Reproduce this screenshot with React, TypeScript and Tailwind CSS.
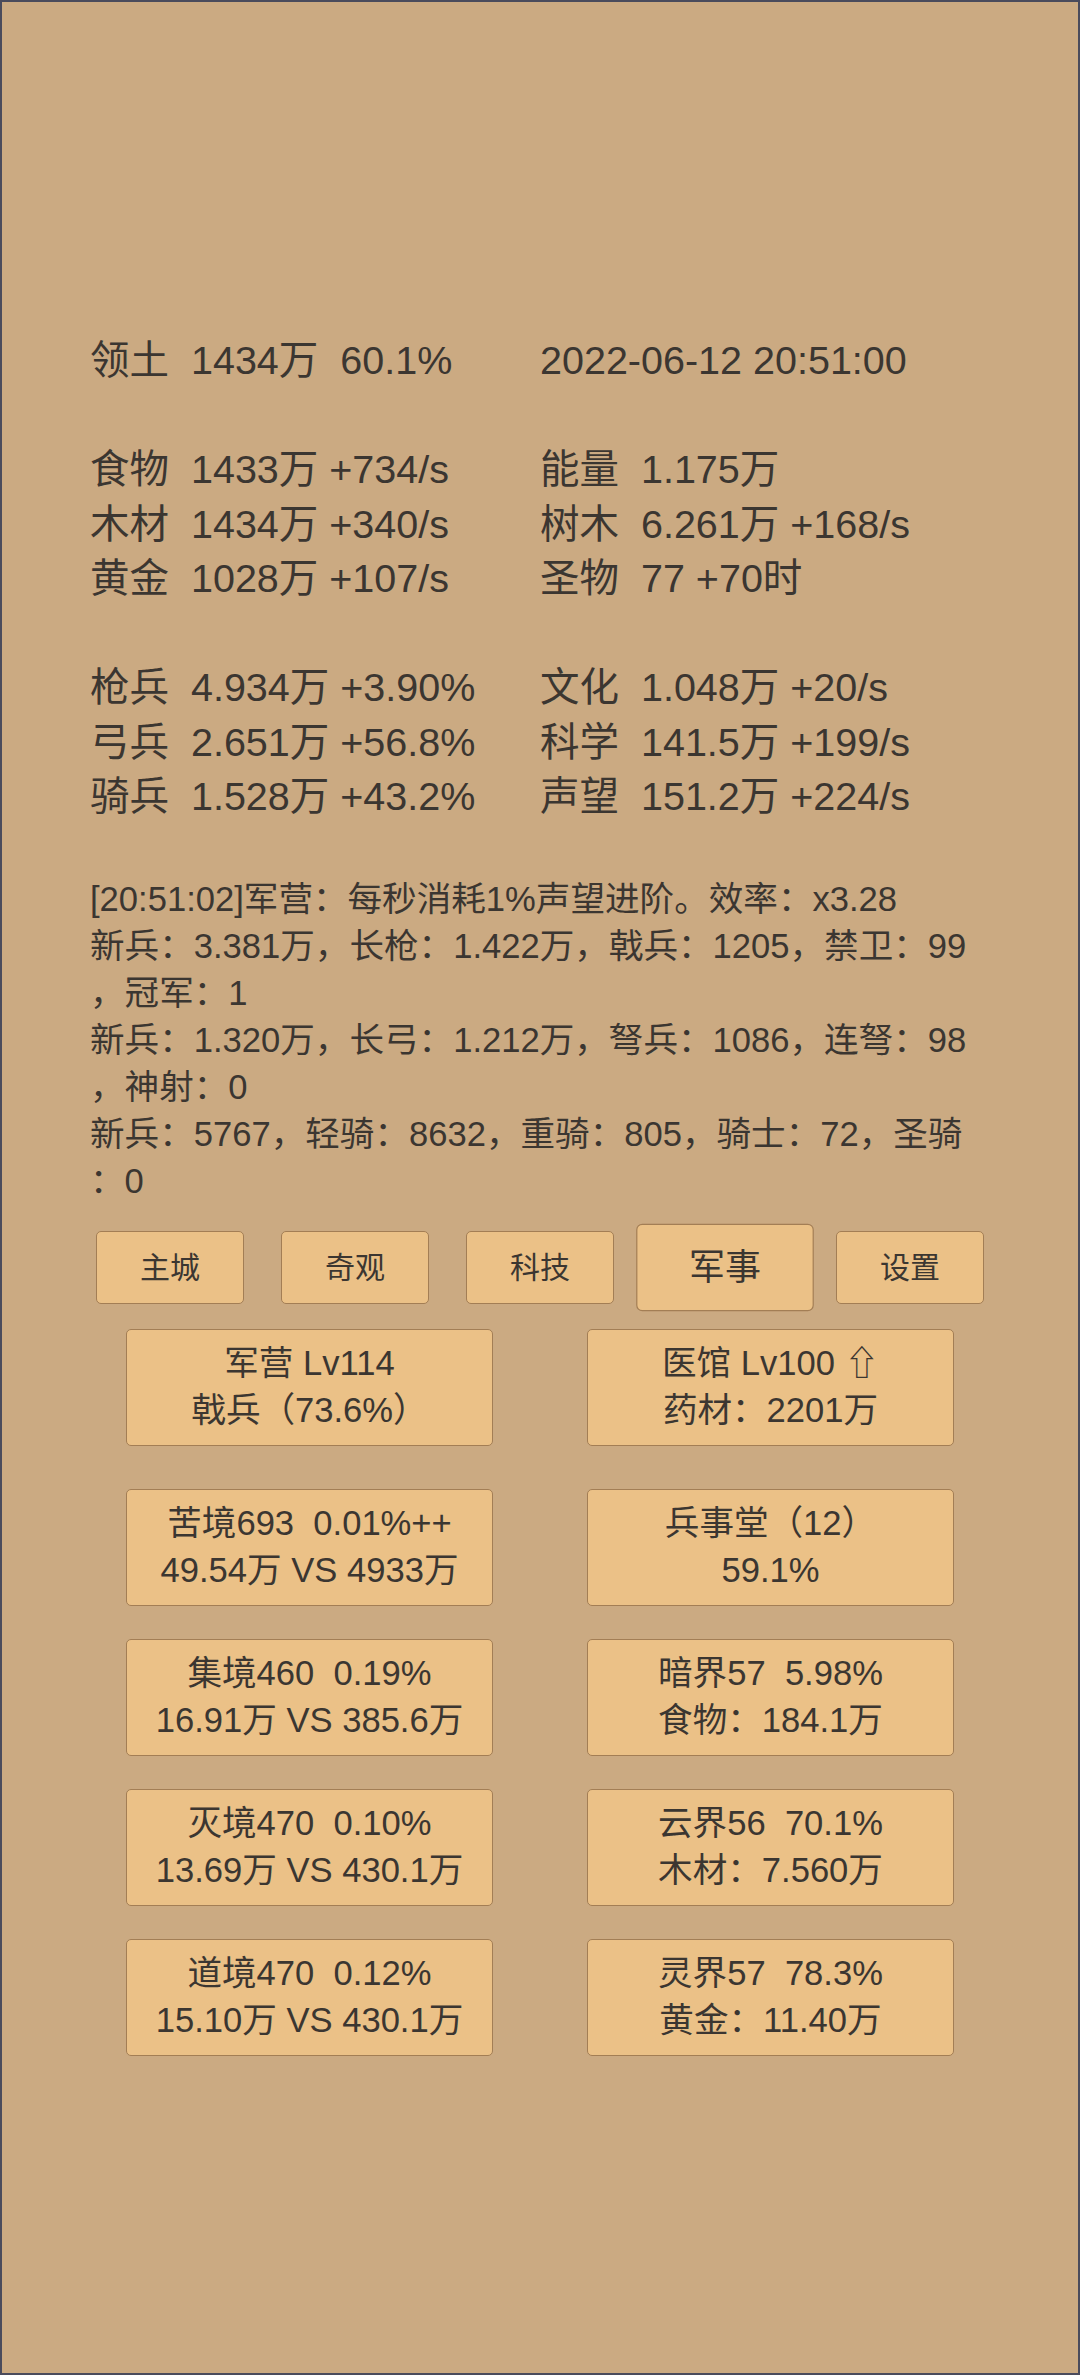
import React from "react";

const stats: [string, string][] = [
  ["领土  1434万  60.1%", "2022-06-12 20:51:00"],
  ["", ""],
  ["食物  1433万 +734/s", "能量  1.175万"],
  ["木材  1434万 +340/s", "树木  6.261万 +168/s"],
  ["黄金  1028万 +107/s", "圣物  77 +70时"],
  ["", ""],
  ["枪兵  4.934万 +3.90%", "文化  1.048万 +20/s"],
  ["弓兵  2.651万 +56.8%", "科学  141.5万 +199/s"],
  ["骑兵  1.528万 +43.2%", "声望  151.2万 +224/s"],
];

const log = [
  "[20:51:02]军营：每秒消耗1%声望进阶。效率：x3.28",
  "新兵：3.381万，长枪：1.422万，戟兵：1205，禁卫：99",
  "，冠军：1",
  "新兵：1.320万，长弓：1.212万，弩兵：1086，连弩：98",
  "，神射：0",
  "新兵：5767，轻骑：8632，重骑：805，骑士：72，圣骑",
  "：0",
];

const tabs = ["主城", "奇观", "科技", "军事", "设置"];

const cards: [string, string][][] = [
  [
    ["军营 Lv114", "戟兵（73.6%）"],
    ["医馆 Lv100 ⇧", "药材：2201万"],
  ],
  [
    ["苦境693  0.01%++", "49.54万 VS 4933万"],
    ["兵事堂（12）", "59.1%"],
  ],
  [
    ["集境460  0.19%", "16.91万 VS 385.6万"],
    ["暗界57  5.98%", "食物：184.1万"],
  ],
  [
    ["灭境470  0.10%", "13.69万 VS 430.1万"],
    ["云界56  70.1%", "木材：7.560万"],
  ],
  [
    ["道境470  0.12%", "15.10万 VS 430.1万"],
    ["灵界57  78.3%", "黄金：11.40万"],
  ],
];

function Card({ a, b }: { a: string; b: string }) {
  return (
    <div className="w-[367px] h-[117px] flex flex-col items-center justify-center rounded-[5px] border border-[#a37e55] bg-[#ebc187] text-[34.6px] leading-[47px] whitespace-pre">
      <div>{a}</div>
      <div>{b}</div>
    </div>
  );
}

export default function App() {
  return (
    <div className="min-h-screen w-full border-2 border-[#4a4b5c] bg-[#cbaa82] text-[#3b3631] font-['Liberation_Sans','Noto_Sans_CJK_SC',sans-serif]">
      <div className="mx-auto w-[900px] pt-[331px] pb-[300px]">
        <div className="grid grid-cols-2 text-[39.5px] leading-[54.5px] whitespace-pre">
          {stats.map(([l, r], i) => (
            <React.Fragment key={i}>
              <div className="h-[54.5px]">{l}</div>
              <div className="h-[54.5px]">{r}</div>
            </React.Fragment>
          ))}
        </div>

        <div className="mt-[52px] text-[34.6px] leading-[47px] whitespace-pre">
          {log.map((t, i) => (
            <div key={i}>{t}</div>
          ))}
        </div>

        <div className="mt-[26px] flex justify-center gap-[37px]">
          {tabs.map((t) => (
            <div
              key={t}
              className={
                t === "军事"
                  ? "w-[148px] h-[73px] flex items-center justify-center rounded-[5px] border border-[#a37e55] bg-[#ebc187] text-[30px] scale-120"
                  : "w-[148px] h-[73px] flex items-center justify-center rounded-[5px] border border-[#a37e55] bg-[#ebc187] text-[30px]"
              }
            >
              {t}
            </div>
          ))}
        </div>

        <div className="mt-[25px] flex flex-col">
          {cards.map((row, i) => (
            <div
              key={i}
              className={
                i === 0
                  ? "flex justify-center gap-[94px]"
                  : i === 1
                  ? "mt-[43px] flex justify-center gap-[94px]"
                  : "mt-[33px] flex justify-center gap-[94px]"
              }
            >
              <Card a={row[0][0]} b={row[0][1]} />
              <Card a={row[1][0]} b={row[1][1]} />
            </div>
          ))}
        </div>
      </div>
    </div>
  );
}
